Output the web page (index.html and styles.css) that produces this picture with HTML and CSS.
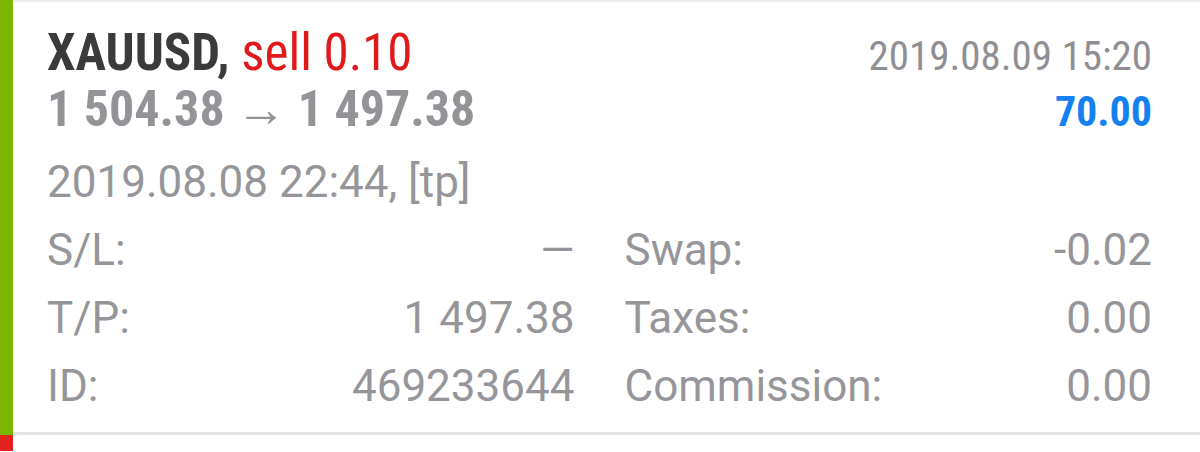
FILE: index.html
```html
<!DOCTYPE HTML>
<html>

<head>
    <meta name="viewport" content="width=device-width, initial-scale=1">
    <title>Trade history</title>
    <link rel="stylesheet" href="styles.css">
</head>

<body>
    <div class="trade">
        <div class="bar bar-buy"></div>
        <div class="content">
            <div class="line line-top">
                <div class="title"><span class="symbol">XAUUSD,</span> <span class="side">sell 0.10</span></div>
                <div class="close-time">2019.08.09 15:20</div>
            </div>
            <div class="line line-prices">
                <div class="prices">1 504.38 &rarr; 1 497.38</div>
                <div class="profit">70.00</div>
            </div>
            <div class="open-time">2019.08.08 22:44, [tp]</div>
            <div class="details">
                <div class="cell"><span>S/L:</span><span>&mdash;</span></div>
                <div class="cell"><span>Swap:</span><span>-0.02</span></div>
                <div class="cell"><span>T/P:</span><span>1 497.38</span></div>
                <div class="cell"><span>Taxes:</span><span>0.00</span></div>
                <div class="cell"><span>ID:</span><span>469233644</span></div>
                <div class="cell"><span>Commission:</span><span>0.00</span></div>
            </div>
        </div>
    </div>
    <div class="trade trade-next">
        <div class="bar bar-sell"></div>
        <div class="content"></div>
    </div>
</body>

</html>
```

FILE: styles.css
```css
html {
    font-family: Roboto, "Noto Sans", sans-serif;
}

body {
    margin: 0px;
    background: #fff;
    width: 1200px;
    height: 452px;
    overflow: hidden;
}

.trade {
    display: flex;
}

.bar {
    width: 13px;
    flex: none;
}

.bar-buy {
    background-color: #7ab800;
}

.bar-sell {
    background-color: #e2211c;
}

.content {
    flex: 1;
    border-top: 2px solid #ededed;
    border-bottom: 3px solid #e4e4e4;
    padding: 22px 48px 12px 34px;
}

.line {
    display: flex;
    justify-content: space-between;
    align-items: baseline;
    height: 57px;
    line-height: 57px;
}

.title {
    font-family: "Roboto Condensed", Roboto, sans-serif;
    font-size: 51px;
}

.symbol {
    font-weight: bold;
    color: #3b3b3d;
}

.side {
    color: #e0191b;
}

.close-time {
    font-family: "Roboto Condensed", Roboto, sans-serif;
    font-size: 41px;
    color: #8f8f93;
}

.prices {
    font-family: "Roboto Condensed", Roboto, sans-serif;
    font-weight: bold;
    font-size: 50px;
    color: #949498;
}

.profit {
    font-family: "Roboto Condensed", Roboto, sans-serif;
    font-weight: bold;
    font-size: 42px;
    color: #1581f0;
}

.open-time {
    margin-top: 13px;
    font-size: 44px;
    line-height: 62px;
    color: #96969a;
}

.details {
    margin-top: 3px;
    display: grid;
    grid-template-columns: 1fr 1fr;
    column-gap: 50px;
    font-size: 44px;
    line-height: 68px;
    color: #96969a;
}

.cell {
    display: flex;
    justify-content: space-between;
}

.trade-next .content {
    height: 15px;
    border: 0;
    padding: 0;
    margin-top: 1px;
}
```
